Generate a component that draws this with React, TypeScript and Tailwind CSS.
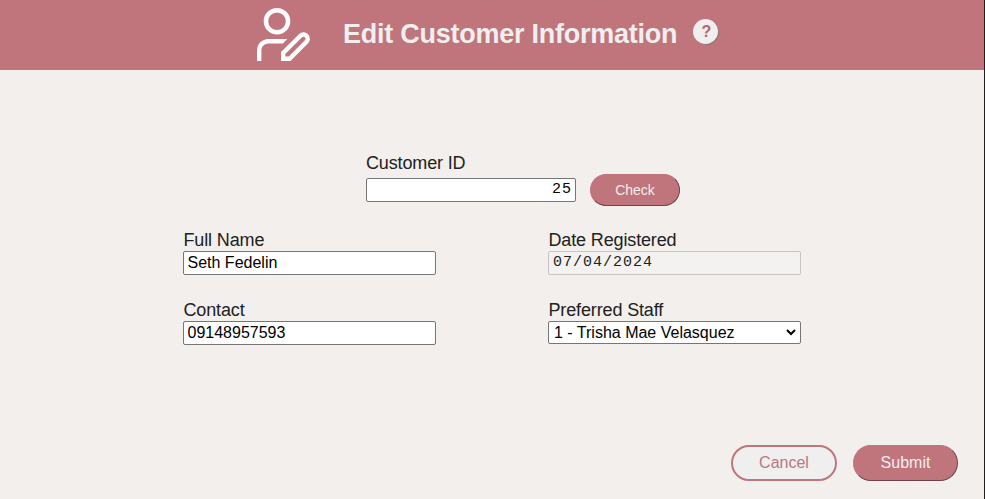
import type { ReactNode } from "react";

function UserEditIcon() {
  return (
    <svg width="56" height="56" viewBox="0 0 56 56" fill="none" className="shrink-0">
      <circle cx="21" cy="14.2" r="11.05" stroke="#fff" strokeWidth="4.5" />
      <path d="M1 54V43.5C1 37 6 32 12.5 32H31.3L26.9 36.4H12.5C8.5 36.4 5.4 39.5 5.4 43.5V54Z" fill="#fff" />
      <path
        d="M27.2 51.8V46L44.46 28.76A4.3 4.3 0 0 1 50.54 34.84L33.58 51.8Z"
        stroke="#fff"
        strokeWidth="4.4"
      />
    </svg>
  );
}

function Field({ label, children }: { label: string; children: ReactNode }) {
  return (
    <label className="flex flex-col">
      <span className="h-[21px] pl-[0.5px] text-[18px] leading-[20px] tracking-[-0.14px] text-[#212121]">{label}</span>
      {children}
    </label>
  );
}

const box = "block h-6 w-full rounded-[2px] border border-[#767676] bg-white text-black outline-none";
const sansBox = "pl-[3.5px] pr-[3px] text-[16px] leading-[22px]";
const monoText = "font-['Liberation_Mono',monospace] text-[15px] leading-[22px] tracking-[1px]";

export default function App() {
  return (
    <div className="flex h-[499px] w-[985px] flex-col overflow-hidden border-r border-[#1f1f1f] bg-[#f3efec] font-['Liberation_Sans',Arial,sans-serif]">
      <header className="flex h-[70px] shrink-0 items-start bg-[#c0757d] pl-[256px]">
        <div className="pt-[7px]"><UserEditIcon /></div>
        <h1 className="ml-[31px] mt-[18px] w-[335px] whitespace-nowrap text-[27px] font-bold leading-8 tracking-[-0.25px] text-[#f0eeee]">Edit Customer Information</h1>
        <button className="ml-[15px] mt-[19px] flex size-[25px] items-center justify-center rounded-full bg-[#f0eeee] pl-[2px] text-[16px] font-bold leading-none text-[#b1686f] shadow-[1px_1px_1px_#8f767a]">?</button>
      </header>

      <main className="flex grow flex-col">
        <div className="ml-[366px] mt-[83px] flex">
          <label className="flex w-[210px] flex-col">
            <span className="h-[25px] text-[18px] leading-[20px] tracking-[-0.14px] text-[#212121]">Customer ID</span>
            <input className={`${box} ${monoText} pb-px pr-[3px] text-right`} defaultValue="25" />
          </label>
          <button className="ml-[14px] mt-[21px] h-8 w-[90px] rounded-full border border-t-[#c0757d] border-l-[#c0757d] border-r-[#70434b] border-b-[#70434b] bg-[#c0757d] text-[14px] text-[#f0eeee]">Check</button>
        </div>

        <div className="ml-[183px] mt-[24px] grid w-[618px] grid-cols-[253px_253px] justify-between gap-y-[25px]">
          <Field label="Full Name"><input className={`${box} ${sansBox}`} defaultValue="Seth Fedelin" /></Field>
          <Field label="Date Registered">
            <input disabled className={`block h-6 w-full rounded-[2px] border border-[#c7c5c4] bg-[#f4f2f0] px-1 pb-px text-[#212121] ${monoText}`} defaultValue="07/04/2024" />
          </Field>
          <Field label="Contact"><input className={`${box} ${sansBox}`} defaultValue="09148957593" /></Field>
          <Field label="Preferred Staff">
            <span className="flex h-[23px] items-center rounded-[2px] border border-[#767676] bg-white pl-[5px] pr-[4px] text-[16px] leading-[21px] text-black">
              <span className="grow">1 - Trisha Mae Velasquez</span>
              <svg width="10" height="7" viewBox="0 0 10 7" fill="none"><path d="M1 1L5 5L9 1" stroke="#000" strokeWidth="2" /></svg>
            </span>
          </Field>
        </div>

        <footer className="mb-[18px] mr-[26px] mt-auto flex justify-end gap-4">
          <button className="h-9 w-[106px] rounded-full border-2 border-[#c0757d] bg-[#efefef] text-[16px] text-[#c0757d]">Cancel</button>
          <button className="h-9 w-[105px] rounded-full border border-t-[#c0757d] border-l-[#c0757d] border-r-[#70434b] border-b-[#70434b] bg-[#c0757d] text-[16px] text-[#f0eeee]">Submit</button>
        </footer>
      </main>
    </div>
  );
}
